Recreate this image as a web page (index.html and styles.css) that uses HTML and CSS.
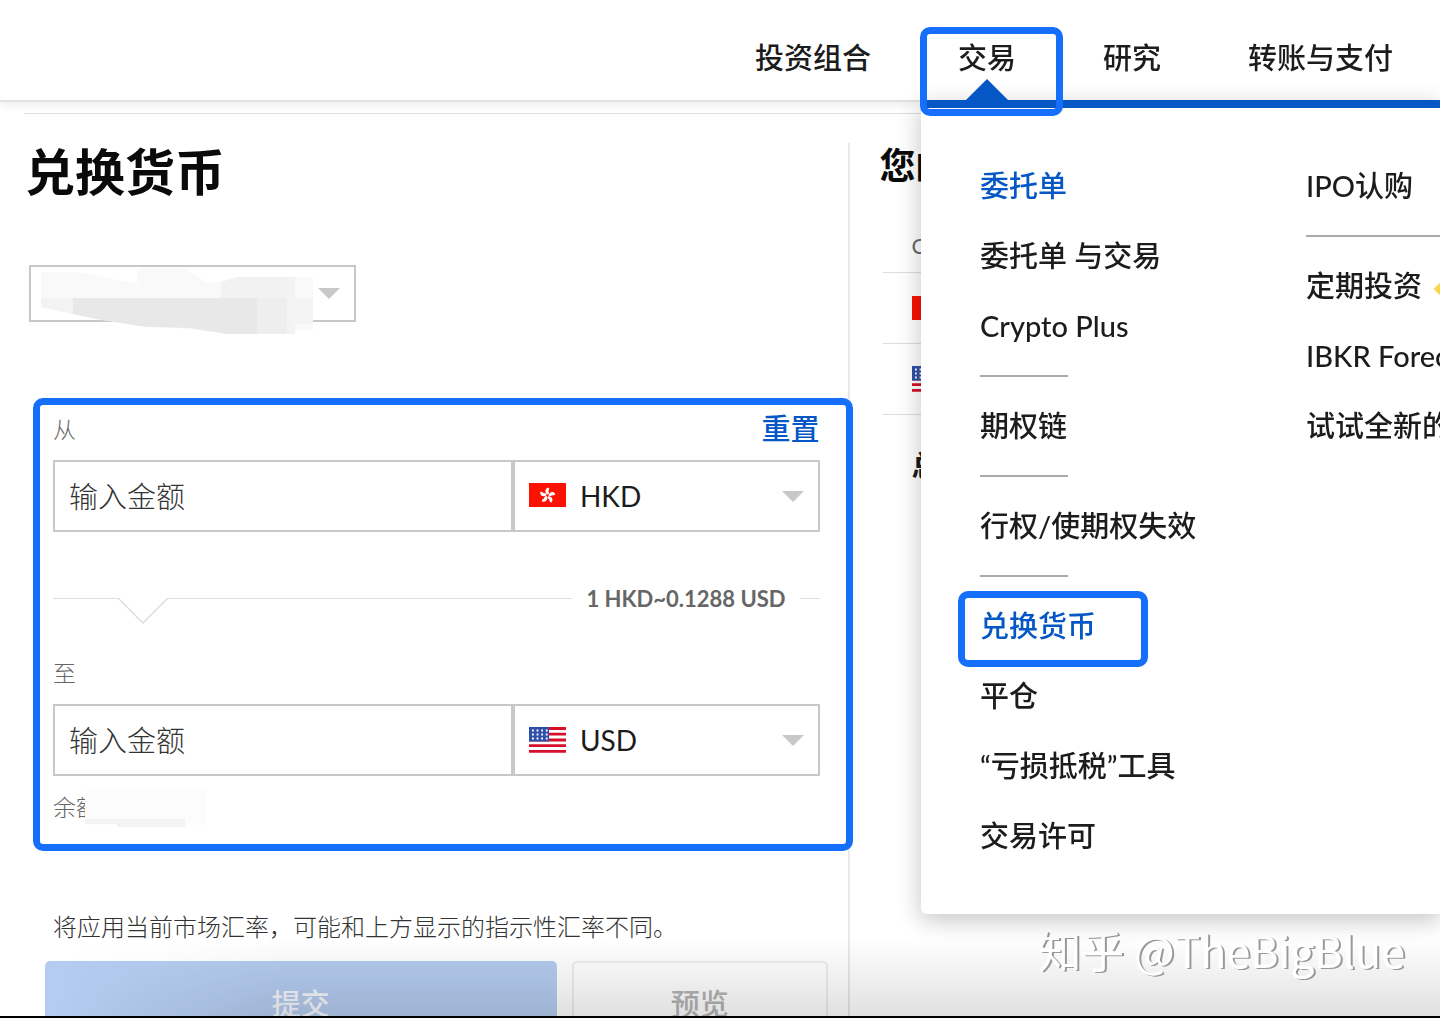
FILE: index.html
```html
<!DOCTYPE html>
<html lang="zh-CN">
<head>
  <meta charset="UTF-8" />
  <meta name="viewport" content="width=device-width, initial-scale=1.0"/>
  <title>兑换货币</title>
  <link rel="stylesheet" href="styles.css">
</head>
<body>

  <svg width="0" height="0" class="defs">
    <symbol id="flag-hk" viewBox="0 0 37 24">
      <rect width="37" height="24" fill="#fb1200"/>
      <g fill="#fff" transform="translate(18.5 12.5)">
        <path id="petal" d="M0 -1C-3 -3 -3 -7 1 -8C3 -6 0 -5 1.500 -3C1.500 -2 1 -1 0 -1Z"/>
        <use href="#petal" transform="rotate(72)"/>
        <use href="#petal" transform="rotate(144)"/>
        <use href="#petal" transform="rotate(216)"/>
        <use href="#petal" transform="rotate(288)"/>
      </g>
    </symbol>
    <symbol id="flag-us" viewBox="0 0 37 26">
      <rect width="37" height="26" fill="#fff"/>
      <path d="M0 1.500H37M0 7.200H37M0 13H37M0 18.700H37M0 24.400H37" stroke="#d80f2b" stroke-width="2.800"/>
      <rect width="20" height="14.500" fill="#2f50a8"/>
      <path d="M3 3.500H19M3 7.500H19M3 11.500H19" stroke="#fff" stroke-width="1.800" stroke-dasharray="1.800 2.800"/>
    </symbol>
  </svg>

  <header>
    <nav>
      <ul class="main-nav">
        <li><a href="#">投资组合</a></li>
        <li class="active"><a href="#">交易</a></li>
        <li><a href="#">研究</a></li>
        <li><a href="#">转账与支付</a></li>
      </ul>

      <!-- Menu: 交易 -->
      <div class="dropdown">
        <ul>
          <li class="current"><a href="#">委托单</a></li>
          <li><a href="#">委托单 与交易</a></li>
          <li><a href="#">Crypto Plus</a></li>
          <li class="divider"></li>
          <li><a href="#">期权链</a></li>
          <li class="divider"></li>
          <li><a href="#">行权/使期权失效</a></li>
          <li class="divider"></li>
          <li class="current marked"><a href="#">兑换货币</a></li>
          <li><a href="#">平仓</a></li>
          <li><a href="#">“亏损抵税”工具</a></li>
          <li><a href="#">交易许可</a></li>
        </ul>
        <ul class="wide">
          <li><a href="#">IPO认购</a></li>
          <li class="divider"></li>
          <li><a href="#">定期投资<span class="diamond"></span></a></li>
          <li><a href="#">IBKR Forec</a></li>
          <li><a href="#">试试全新的</a></li>
        </ul>
      </div>
    </nav>
  </header>

  <main>
    <section class="convert">
      <h1>兑换货币</h1>

      <div class="select account">
        <select aria-label="账户"><option></option></select>
        <svg class="smudge" width="274" height="68" viewBox="0 0 274 68">
          <path d="M0 4H38L96 16V0H144L164 14L180 14L196 9H272V62H240V66H190L100 56L30 42L0 38Z" fill="#f9f9f9"/>
          <path d="M180 14L196 9H254V30H180Z" fill="#f2f2f2"/>
          <path d="M0 30H272V56H254V66H186L150 60L100 58L50 50L0 39Z" fill="#f3f3f3"/>
          <path d="M32 30H216V66H186L150 60L106 59L60 52L32 46Z" fill="#e8e8e8"/>
          <path d="M216 30H246V66H216Z" fill="#eee"/>
        </svg>
      </div>

      <form class="exchange">
        <div class="field-head">
          <label for="from-amount">从</label>
          <a class="reset" href="#">重置</a>
        </div>
        <div class="field">
          <input id="from-amount" type="text" placeholder="输入金额">
          <div class="select">
            <svg class="flag" width="37" height="24"><use href="#flag-hk"/></svg>
            <select aria-label="从货币"><option>HKD</option></select>
          </div>
        </div>

        <div class="rate">
          <span class="line start"></span>
          <svg width="50" height="52" viewBox="0 0 50 52"><path d="M0 26L25 51L50 26" fill="none" stroke="#ddd" stroke-width="1.500"/></svg>
          <span class="line"></span>
          <strong>1 HKD~0.1288 USD</strong>
          <span class="line end"></span>
        </div>

        <div class="field-head">
          <label for="to-amount">至</label>
        </div>
        <div class="field">
          <input id="to-amount" type="text" placeholder="输入金额">
          <div class="select">
            <svg class="flag" width="37" height="26"><use href="#flag-us"/></svg>
            <select aria-label="至货币"><option>USD</option></select>
          </div>
        </div>
        <p class="balance">余额
          <svg class="smudge" width="120" height="40" viewBox="0 0 120 40">
            <rect width="120" height="36" fill="#fcfcfc"/>
            <path d="M0 30H100V38H32V35H0Z" fill="#f3f3f3"/>
          </svg>
        </p>
      </form>

      <p class="note">将应用当前市场汇率，可能和上方显示的指示性汇率不同。</p>
      <div class="actions">
        <button class="submit" type="button">提交</button>
        <button class="preview" type="button">预览</button>
      </div>
    </section>

    <section class="balances">
      <h2>您的</h2>
      <table>
        <thead>
          <tr><th>C</th></tr>
        </thead>
        <tbody>
          <tr><td><svg width="37" height="24"><use href="#flag-hk"/></svg></td></tr>
          <tr><td><svg width="37" height="26"><use href="#flag-us"/></svg></td></tr>
        </tbody>
        <tfoot>
          <tr><td>总</td></tr>
        </tfoot>
      </table>
    </section>
  </main>

  <footer>知乎 @TheBigBlue</footer>

</body>
</html>
```
FILE: styles.css
```css
*,
*::before,
*::after {
  margin: 0;
  padding: 0;
  box-sizing: border-box;
  font-family: Lato, 'Noto Sans CJK SC', sans-serif;
}

body {
  height: 100vh;
  overflow: hidden;
  background: #fff;
  color: #1c1c1c;
  font-size: 29px;
}

ul {
  list-style: none;
}

a {
  color: inherit;
  text-decoration: none;
}

.defs {
  position: absolute;
}

/* Header */
header {
  position: relative;
  z-index: 2;
  background: #fff;
  border-bottom: 2px solid #e2e2e2;
  box-shadow: 0 3px 8px rgba(0,0,0,0.08);
}

.main-nav {
  display: flex;
  justify-content: flex-end;
  gap: 87px;
  padding-right: 47px;
  height: 100px;
  line-height: 116px;
  font-weight: 500;
}

.main-nav li {
  position: relative;
  z-index: 1;
  white-space: nowrap;
}

.active::before {
  content: '';
  position: absolute;
  bottom: 0;
  left: 8px;
  border: 21px solid transparent;
  border-top: 0;
  border-bottom-color: #0557c5;
}

.active::after {
  content: '';
  position: absolute;
  inset: 27px -47px -16px -38px;
  border: 7px solid #156ffb;
  border-radius: 10px;
}

.dropdown {
  position: absolute;
  top: 100px;
  right: 0;
  width: 519px;
  display: grid;
  grid-template-columns: 326px 1fr;
  padding: 43px 0 43px 59px;
  background: #fff;
  border-top: 8px solid #0557c5;
  border-bottom-left-radius: 6px;
  box-shadow: 0 6px 24px rgba(0,0,0,0.24);
  line-height: 70px;
  font-weight: 500;
  white-space: nowrap;
}

.dropdown li {
  position: relative;
  height: 70px;
}

.dropdown .divider {
  width: 88px;
  height: 30px;
  padding-top: 14px;
}

.dropdown .divider::before {
  content: '';
  display: block;
  height: 2px;
  background: #aaa;
}

.dropdown .wide {
  overflow: hidden;
}

.dropdown .wide .divider {
  width: 100%;
}

.current {
  color: #0557c5;
}

.marked::after {
  content: '';
  position: absolute;
  top: 0;
  left: -22px;
  width: 190px;
  height: 76px;
  border: 7px solid #156ffb;
  border-radius: 10px;
}

.diamond {
  display: inline-block;
  width: 16px;
  height: 16px;
  margin-left: 15px;
  background: #fbd64a;
  transform: rotate(45deg);
}

/* Content */
main {
  display: grid;
  grid-template-columns: 59% 41%;
  margin-top: 11px;
}

main::before {
  content: '';
  grid-column: 1 / -1;
  height: 1px;
  margin: 0 0 29px 24px;
  background: #ddd;
}

.convert {
  padding: 0 28px 0 53px;
  border-right: 2px solid #e8e8e8;
}

h1 {
  margin-left: -28px;
  color: #0a0a0a;
  font-size: 50px;
  line-height: 58px;
  font-weight: 700;
}

.select {
  position: relative;
}

.select::after {
  content: '';
  position: absolute;
  top: 31px;
  right: 16px;
  border: 11px solid transparent;
  border-top-color: #c8c8c8;
  border-bottom: 0;
}

select,
input {
  width: 100%;
  height: 72px;
  border: 2px solid #c8c8c8;
  border-radius: 0;
  background: #fff;
  appearance: none;
  color: #1c1c1c;
  font-size: 29px;
}

select {
  padding-left: 65px;
  font-size: 28px;
}

input {
  padding-left: 14px;
}

input::placeholder {
  color: #333;
  font-weight: 300;
}

.account {
  width: 327px;
  margin: 64px 0 87px -24px;
}

.account select {
  display: block;
  height: 57px;
}

.account::after {
  top: 23px;
}

.smudge {
  position: absolute;
}

.account .smudge {
  top: 3px;
  left: 12px;
}

.exchange {
  position: relative;
}

.exchange::after {
  content: '';
  position: absolute;
  inset: -11px -33px -24px -20px;
  border: 7px solid #156ffb;
  border-radius: 10px;
  pointer-events: none;
}

.field-head {
  display: flex;
  justify-content: space-between;
  margin-bottom: 11px;
  line-height: 40px;
}

.field-head label,
.balance {
  color: #666;
  font-size: 23px;
  font-weight: 300;
}

.reset {
  color: #0557c5;
  font-weight: 500;
}

.field {
  display: grid;
  grid-template-columns: 3fr 2fr;
}

.flag {
  position: absolute;
  top: 23px;
  left: 16px;
}

.rate {
  display: flex;
  align-items: center;
  margin: 40px 0 29px;
  color: #666;
  font-size: 22px;
}

.rate strong {
  margin: 0 14px;
  font-weight: 700;
}

.line {
  flex: 1;
  height: 1px;
  background: #ddd;
}

.line.start {
  flex: 0 0 65px;
}

.line.end {
  flex: 0 0 20px;
}

.balance {
  position: relative;
  margin-top: 11px;
  line-height: 40px;
}

.balance .smudge {
  top: 2px;
  left: 32px;
}

.note {
  margin: 80px 0 14px;
  color: #333;
  font-size: 24px;
  line-height: 40px;
  font-weight: 300;
  white-space: nowrap;
}

.actions {
  display: grid;
  grid-template-columns: 2fr 1fr;
  gap: 15px;
  margin: 0 -8px;
}

.actions button {
  height: 82px;
  border: 2px solid #eee;
  border-radius: 5px;
  background: #fff;
  color: #b4b4b4;
  font-size: 29px;
  font-weight: 500;
}

.actions .submit {
  border: 0;
  background: #b5ccf0;
  color: #f4f7fc;
}

.balances {
  padding-left: 30px;
}

h2 {
  color: #0a0a0a;
  font-size: 36px;
  line-height: 44px;
  font-weight: 700;
}

table {
  width: 100%;
  margin: 32px 0 0 3px;
  border-collapse: collapse;
}

th,
td {
  height: 71px;
  padding-left: 29px;
  border-bottom: 1px solid #ddd;
  text-align: left;
}

th {
  height: 53px;
  color: #666;
  font-size: 22px;
  font-weight: 400;
}

td svg {
  display: block;
}

tfoot td {
  height: 100px;
  border: 0;
  font-weight: 700;
}

/* Watermark over the darkened bottom edge */
footer {
  position: fixed;
  inset: auto 0 0 0;
  height: 98px;
  padding-right: 35px;
  border-bottom: 2px solid #000;
  color: #fff;
  font-family: 'Noto Sans CJK SC', sans-serif;
  font-size: 43px;
  line-height: 58px;
  text-align: right;
  text-shadow: 2px 1px 0 #999;
}

footer::before {
  content: '';
  position: absolute;
  inset: 0;
  z-index: -1;
  background: linear-gradient(transparent 20%, rgba(0,0,0,0.12));
  -webkit-mask-image: linear-gradient(to right, transparent 4%, #000 20%);
  mask-image: linear-gradient(to right, transparent 4%, #000 20%);
}
```
